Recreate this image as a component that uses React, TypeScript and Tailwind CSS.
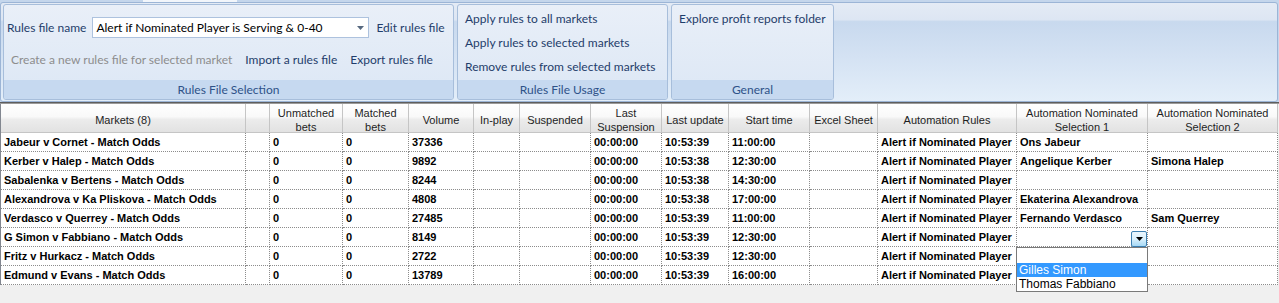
import React from 'react'

const RIBBON_FONT = { fontFamily: 'Lato, "Liberation Sans", sans-serif' }

interface Col {
  w: string
  label: string[]
}

const COLS: Col[] = [
  { w: 'w-[245px]', label: ['Markets (8)'] },
  { w: 'w-[24px]', label: [] },
  { w: 'w-[73px]', label: ['Unmatched', 'bets'] },
  { w: 'w-[66px]', label: ['Matched', 'bets'] },
  { w: 'w-[65px]', label: ['Volume'] },
  { w: 'w-[46px]', label: ['In-play'] },
  { w: 'w-[71px]', label: ['Suspended'] },
  { w: 'w-[71px]', label: ['Last', 'Suspension'] },
  { w: 'w-[67px]', label: ['Last update'] },
  { w: 'w-[81px]', label: ['Start time'] },
  { w: 'w-[68px]', label: ['Excel Sheet'] },
  { w: 'w-[139px]', label: ['Automation Rules'] },
  { w: 'w-[131px]', label: ['Automation Nominated', 'Selection 1'] },
  { w: 'w-[130px]', label: ['Automation Nominated', 'Selection 2'] },
]

const RULE = 'Alert if Nominated Player'

// market, volume, last update, start time, sel1, sel2
const ROWS: [string, string, string, string, string, string][] = [
  ['Jabeur v Cornet - Match Odds', '37336', '10:53:39', '11:00:00', 'Ons Jabeur', ''],
  ['Kerber v Halep - Match Odds', '9892', '10:53:38', '12:30:00', 'Angelique Kerber', 'Simona Halep'],
  ['Sabalenka v Bertens - Match Odds', '8244', '10:53:38', '14:30:00', '', ''],
  ['Alexandrova v Ka Pliskova - Match Odds', '4808', '10:53:38', '17:00:00', 'Ekaterina Alexandrova', ''],
  ['Verdasco v Querrey - Match Odds', '27485', '10:53:39', '11:00:00', 'Fernando Verdasco', 'Sam Querrey'],
  ['G Simon v Fabbiano - Match Odds', '8149', '10:53:39', '12:30:00', '', ''],
  ['Fritz v Hurkacz - Match Odds', '2722', '10:53:39', '12:30:00', '', ''],
  ['Edmund v Evans - Match Odds', '13789', '10:53:39', '16:00:00', '', ''],
]

function Group({ w, label, children }: { w: string; label: string; children: React.ReactNode }) {
  return (
    <div className={`${w} h-[96px] flex flex-col rounded-[3px] border border-[#a7bedb] overflow-hidden bg-[linear-gradient(to_bottom,#e9eff8_0%,#dce7f5_100%)]`}>
      <div className="flex-1">{children}</div>
      <div className="h-[19px] flex items-center justify-center bg-[#c6d9f0] text-[12px] text-[#2e5288]">{label}</div>
    </div>
  )
}

function ComboCell() {
  return (
    <div className="relative h-full">
      <div className="absolute right-[0px] top-[3px] w-[16px] h-[16px] border border-[#3c7fb1] rounded-[2px] bg-[linear-gradient(to_bottom,#eaf6fd_0%,#d9f0fc_50%,#a7d9f5_100%)] flex items-center justify-center">
        <svg width="7" height="4" viewBox="0 0 7 4"><path d="M0 0h7L3.5 4z" fill="#000" /></svg>
      </div>
      <div className="absolute left-[-1px] top-[19px] w-[132px] z-10 bg-white border border-[#7a7a7a] font-normal text-[12px] leading-[14px]" style={{ fontFamily: '"Liberation Sans", sans-serif' }}>
        <div className="h-[15px]" />
        <div className="h-[14px] bg-[#3399ff] text-white pl-[2px]">Gilles Simon</div>
        <div className="h-[14px] text-black pl-[2px]">Thomas Fabbiano</div>
      </div>
    </div>
  )
}

export default function App() {
  return (
    <div className="w-[1279px] h-[303px] overflow-hidden bg-[#f0f0f0]">
      {/* ribbon */}
      <div className="h-[102px] bg-[#c4d6ec]" style={RIBBON_FONT}>
        <div className="h-[2px] flex">
          <div className="w-[143px] bg-[#c4d6ec]" />
          <div className="w-[94px] bg-[#f2f6fb]" />
          <div className="flex-1 bg-[#c4d6ec]" />
        </div>
        <div className="w-[1278px] h-[100px] rounded-[3px] border border-[#9cb5d6] pl-[2px] pt-[1px] flex gap-[3px] bg-[linear-gradient(to_bottom,#e4ebf5_0%,#dde6f3_17%,#c8d9ee_19%,#d4e2f3_55%,#e3eef9_100%)]">
          <Group w="w-[451px]" label="Rules File Selection">
            <div className="mt-[12px] h-[21px] pl-[3px] flex items-center text-[12px] text-[#1f3d6b]">
              <span>Rules file name</span>
              <div className="ml-[6px] w-[277px] h-[21px] bg-white border border-[#adc2de] flex items-center pl-[3px] pr-[4px] text-black">
                <span className="flex-1">Alert if Nominated Player is Serving &amp; 0-40</span>
                <svg width="7" height="4" viewBox="0 0 7 4"><path d="M0 0h7L3.5 4z" fill="#56687f" /></svg>
              </div>
              <span className="ml-[7px]">Edit rules file</span>
            </div>
            <div className="mt-[11px] h-[21px] pl-[7px] flex items-center gap-[13px] text-[12px] text-[#1f3d6b]">
              <span className="text-[#8d8d8d]">Create a new rules file for selected market</span>
              <span>Import a rules file</span>
              <span>Export rules file</span>
            </div>
          </Group>
          <Group w="w-[211px]" label="Rules File Usage">
            <div className="pt-[2px] pl-[7px] flex flex-col text-[12px] text-[#1f3d6b]">
              <div className="h-[24px] flex items-center">Apply rules to all markets</div>
              <div className="h-[24px] flex items-center">Apply rules to selected markets</div>
              <div className="h-[24px] flex items-center">Remove rules from selected markets</div>
            </div>
          </Group>
          <Group w="w-[163px]" label="General">
            <div className="pt-[2px] pl-[7px] text-[12px] text-[#1f3d6b]">
              <div className="h-[24px] flex items-center">Explore profit reports folder</div>
            </div>
          </Group>
        </div>
      </div>
      <div className="h-[2px] border-t border-[#5e5e5e] bg-[#9a9a9a]" />

      {/* grid */}
      <div className="border-l border-[#828790] w-[1278px]" style={{ fontFamily: '"Liberation Sans", Arial, sans-serif' }}>
        <div className="flex h-[29px]">
          {COLS.map((c, i) => (
            <div
              key={i}
              className={`${c.w} shrink-0 h-full pt-[3px] flex flex-col items-center justify-center border-r border-b border-[#c5c5c5] text-[11px] leading-[14px] text-[#1e1e1e] text-center bg-[linear-gradient(to_bottom,#ffffff_0%,#f9f9f9_45%,#ececec_55%,#e2e2e2_100%)]`}
            >
              {c.label.map((l) => <span key={l}>{l}</span>)}
            </div>
          ))}
        </div>
        {ROWS.map((r, ri) => {
          const cells = [r[0], '', '0', '0', r[1], '', '', '00:00:00', r[2], r[3], '', RULE, r[4], r[5]]
          return (
            <div key={ri} className="flex h-[19px]">
              {cells.map((v, ci) => {
                const combo = ri === 5 && ci === 12
                return (
                  <div
                    key={ci}
                    className={`${COLS[ci].w} shrink-0 h-full bg-white border-r border-b border-dotted border-[#8c8c8c] text-[11px] font-bold leading-[18px] text-black whitespace-nowrap ${combo ? 'overflow-visible' : 'overflow-hidden pl-[3px]'}`}
                  >
                    {combo ? <ComboCell /> : v}
                  </div>
                )
              })}
            </div>
          )
        })}
      </div>
    </div>
  )
}
